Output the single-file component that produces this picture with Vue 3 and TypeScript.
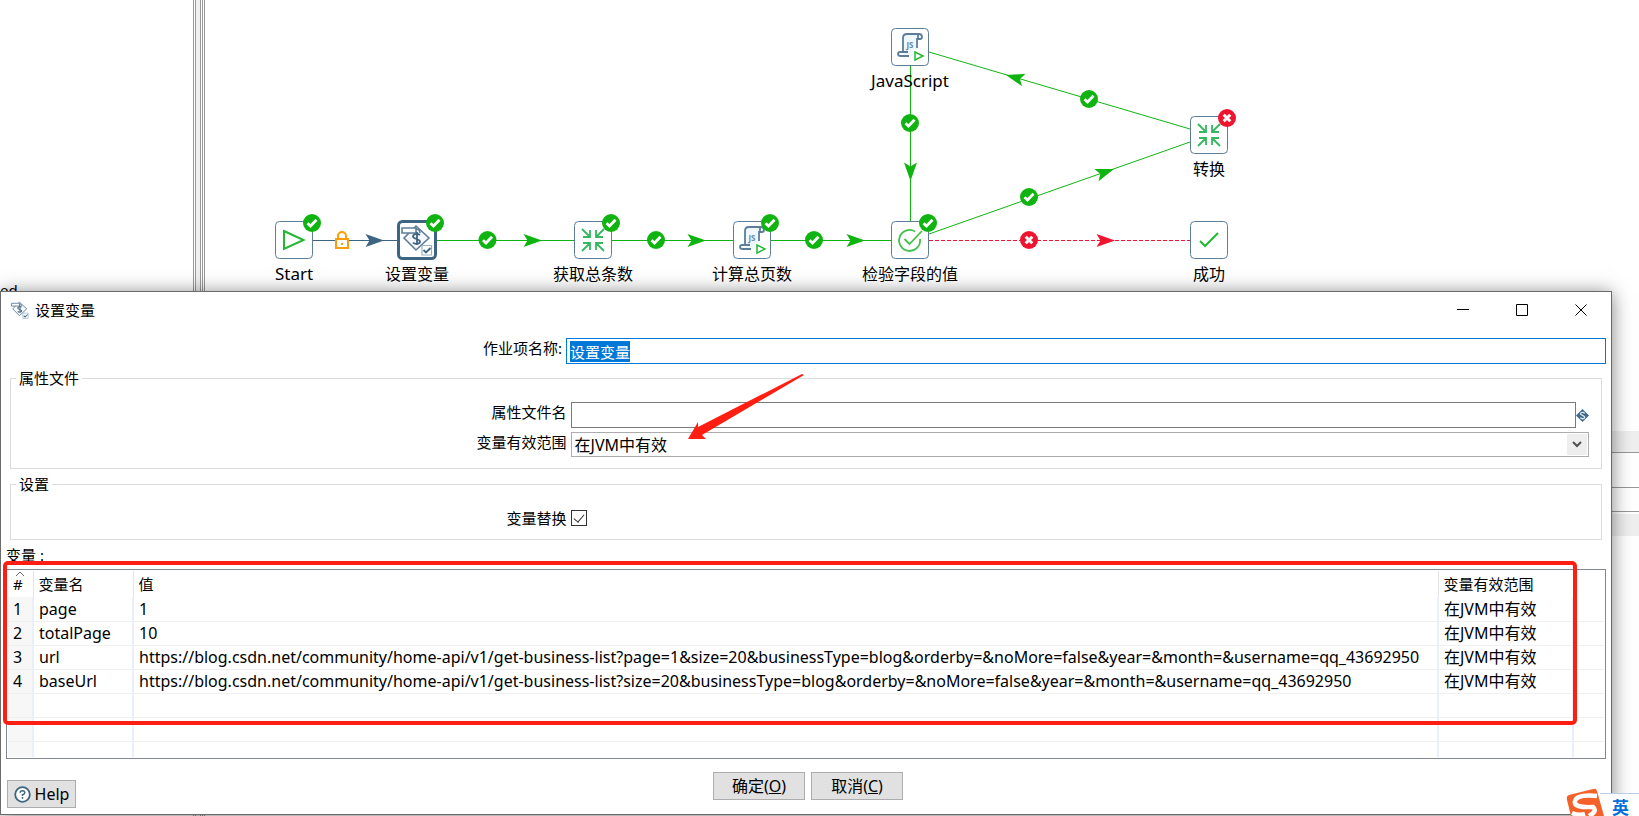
<script setup lang="ts">
import { ref, onMounted } from 'vue'

type Kind = 'start' | 'variables' | 'job' | 'script' | 'check' | 'done'
interface Step { name: string; kind: Kind; x: number; y: number; mark?: 'ok' | 'bad'; selected?: boolean; latin?: boolean }
interface Variable { name: string; value: string; scope: string }

const steps: Step[] = [
  { name: 'Start', kind: 'start', x: 294, y: 240, mark: 'ok', latin: true },
  { name: '设置变量', kind: 'variables', x: 417, y: 240, mark: 'ok', selected: true },
  { name: '获取总条数', kind: 'job', x: 593, y: 240, mark: 'ok' },
  { name: '计算总页数', kind: 'script', x: 752, y: 240, mark: 'ok' },
  { name: '检验字段的值', kind: 'check', x: 910, y: 240, mark: 'ok' },
  { name: '成功', kind: 'done', x: 1209, y: 240 },
  { name: '转换', kind: 'job', x: 1209, y: 135, mark: 'bad' },
  { name: 'JavaScript', kind: 'script', x: 910, y: 47, latin: true }
]

const hops = [
  { d: 'M313 240.5H397', tone: 'navy' },
  { d: 'M437 240.5H574', tone: 'green' },
  { d: 'M612 240.5H733', tone: 'green' },
  { d: 'M771 240.5H891', tone: 'green' },
  { d: 'M910.5 65V221', tone: 'green' },
  { d: 'M929 234L1190 142', tone: 'green' },
  { d: 'M1190 129L929 52', tone: 'green' },
  { d: 'M929 240.5H1190', tone: 'red' }
]

const arrows = [
  { x: 384, y: 240.5, turn: 0, tone: 'navy' },
  { x: 542, y: 240.5, turn: 0, tone: 'green' },
  { x: 706, y: 240.5, turn: 0, tone: 'green' },
  { x: 865, y: 240.5, turn: 0, tone: 'green' },
  { x: 910.5, y: 181, turn: 90, tone: 'green' },
  { x: 1114, y: 169, turn: -19, tone: 'green' },
  { x: 1006, y: 75, turn: 196, tone: 'green' },
  { x: 1115, y: 240.5, turn: 0, tone: 'red' }
]

const marks = [
  { x: 487.5, y: 240, ok: true },
  { x: 656, y: 240, ok: true },
  { x: 814, y: 240, ok: true },
  { x: 910, y: 123, ok: true },
  { x: 1029, y: 197, ok: true },
  { x: 1089, y: 99, ok: true },
  { x: 1029, y: 240, ok: false }
]

const variables: Variable[] = [
  { name: 'page', value: '1', scope: '在JVM中有效' },
  { name: 'totalPage', value: '10', scope: '在JVM中有效' },
  { name: 'url', value: 'https://blog.csdn.net/community/home-api/v1/get-business-list?page=1&size=20&businessType=blog&orderby=&noMore=false&year=&month=&username=qq_43692950', scope: '在JVM中有效' },
  { name: 'baseUrl', value: 'https://blog.csdn.net/community/home-api/v1/get-business-list?size=20&businessType=blog&orderby=&noMore=false&year=&month=&username=qq_43692950', scope: '在JVM中有效' }
]
const blankRows = 3

const entryName = ref('设置变量')
const fileName = ref('')
const scope = ref('在JVM中有效')
const replace = ref(true)
const nameBox = ref<HTMLInputElement | null>(null)

onMounted(() => {
  nameBox.value?.focus()
  nameBox.value?.select()
})
</script>

<template>
  <div class="desktop">
    <div class="workspace">
      <aside class="tree"><span class="tree-item">ed</span></aside>
      <div class="sash"><i></i></div>
      <main class="canvas-area"></main>
    </div>
    <svg class="canvas" width="1400" height="291" viewBox="0 0 1400 291" role="img" aria-label="作业">
      <defs>
        <g id="ok"><circle r="9" fill="#10b410" /><path d="M-4.5 .2L-1.5 3L4.5 -3.2" fill="none" stroke="#fff" stroke-width="2.8" /></g>
        <g id="bad"><circle r="9" fill="#f0142f" /><path d="M-3.3 -3.3L3.3 3.3M3.3 -3.3L-3.3 3.3" fill="none" stroke="#fff" stroke-width="3" /></g>
        <g id="variables" fill="none" stroke="#5d7d99" stroke-width="1.6">
          <path d="M-1 -14L12 -2L-1 10L-13 -2Z" fill="#f5f7fa" />
          <path d="M-15 -12H-1V-7H-15Z" fill="#fff" />
          <path d="M-1 -11Q3 -11 3 -7" />
          <path d="M3 -5C0 -7 -4 -6 -4 -3.500S3 -1 3 1.500S-2 5 -4 2.500M0 -8V5" stroke="#3d6480" stroke-width="1.800" />
          <path d="M5 5.500H14.500V15H5Z" fill="#fff" stroke="#9bb0c1" stroke-width="1.200" />
          <path d="M6.500 10L9 12.500L13.500 8" stroke="#3d6480" stroke-width="1.800" />
        </g>
      </defs>
      <path v-for="(h, i) in hops" :key="'h' + i" :d="h.d" :class="['hop', h.tone]" />
      <path v-for="(a, i) in arrows" :key="'a' + i" d="M0 0L-18.500 -6.500L-14.500 0L-18.500 6.500Z" :class="['tip', a.tone]" :transform="`translate(${a.x} ${a.y}) rotate(${a.turn})`" />
      <use v-for="(m, i) in marks" :key="'m' + i" :href="m.ok ? '#ok' : '#bad'" :x="m.x" :y="m.y" />
      <g transform="translate(342 240)">
        <path d="M-6 -1H6V8H-6ZM-4 -1V-4A4 4 0 0 1 4 -4V-1" fill="#fff" stroke="#ff9c0e" stroke-width="2" />
        <path d="M-1 3H1V5H-1Z" fill="#ff9c0e" />
      </g>
      <g v-for="s in steps" :key="s.name" :transform="`translate(${s.x} ${s.y})`">
        <rect :class="['box', { selected: s.selected }]" x="-18.500" y="-18.500" width="37" height="37" rx="4" />
        <path v-if="s.kind === 'start'" d="M-10 -9L9.500 0L-10 9Z" class="green-line" />
        <use v-else-if="s.kind === 'variables'" href="#variables" />
        <path v-else-if="s.kind === 'job'" d="M-11 -11L-3 -3M-3 -10V-3H-10M11 -11L3 -3M3 -10V-3H10M-11 11L-3 3M-3 10V3H-10M11 11L3 3M3 10V3H10" fill="none" stroke="#35b85f" stroke-width="1.800" />
        <g v-else-if="s.kind === 'script'">
          <path d="M-7 5V-9Q-7 -13 -3 -13H8Q12 -13 12 -10Q12 -8 10 -8H7V3H3V9H-7Z" fill="#eef8fd" />
          <path d="M-7 5V-9Q-7 -13 -3 -13H9Q12 -13 12 -10Q12 -8 10 -8H7V1M8 -12V-8M-1 9H-9Q-12 9 -12 7Q-12 5 -10 5H-2" fill="none" stroke="#5d7d99" stroke-width="1.800" />
          <text x="0" y="1" class="js">JS</text>
          <path d="M5 5L13 9L5 13Z" class="green-line small" />
        </g>
        <path v-else-if="s.kind === 'check'" d="M5 -8.500A10.500 10.500 0 1 0 10 -1M-5.500 -1L-.500 4L12 -9" fill="none" stroke="#43c04c" stroke-width="1.800" />
        <path v-else d="M-9 1L-4 6L9 -7" class="green-line" />
        <use v-if="s.mark" :href="s.mark === 'ok' ? '#ok' : '#bad'" x="18" y="-17" />
        <text y="40" :class="['caption', { latin: s.latin }]">{{ s.name }}</text>
      </g>
    </svg>
    <div class="side-panels"><i></i><i></i><i></i><i></i></div>

    <section class="dialog" role="dialog" aria-labelledby="dialog-title">
      <header class="titlebar">
        <svg class="title-icon" width="18" height="18" viewBox="-16 -16 32 32"><use href="#variables" /></svg>
        <h1 id="dialog-title">设置变量</h1>
        <div class="window-buttons">
          <button type="button" aria-label="最小化"><svg width="12" height="12"><path d="M0 5.500H12" /></svg></button>
          <button type="button" aria-label="最大化"><svg width="12" height="12"><path d="M.5 .5H11.500V11.500H.5Z" /></svg></button>
          <button type="button" aria-label="关闭"><svg width="12" height="12"><path d="M.5 .5L11.500 11.500M11.500 .5L.5 11.500" /></svg></button>
        </div>
      </header>

      <form class="body" @submit.prevent>
        <div class="row name-row">
          <label for="entry-name">作业项名称:</label>
          <input id="entry-name" ref="nameBox" v-model="entryName" type="text" class="focused" />
        </div>

        <fieldset class="file-group">
          <legend>属性文件</legend>
          <div class="row">
            <label for="file-name">属性文件名</label>
            <div class="with-icon">
              <input id="file-name" v-model="fileName" type="text" />
              <svg width="13" height="13" viewBox="0 0 13 13"><path d="M6.500 0L13 6.500L6.500 13L0 6.500Z" fill="#426a8a" /><path d="M8.700 4.300C7.500 2.800 4.500 3.200 4.500 4.800S8.700 6.500 8.700 8.300S5.500 10.200 4.300 8.700" fill="none" stroke="#dbe6ee" stroke-width="1.300" /></svg>
            </div>
          </div>
          <div class="row">
            <label for="scope">变量有效范围</label>
            <div class="select-wrap">
              <select id="scope" v-model="scope"><option>在JVM中有效</option></select>
              <span class="chevron"><svg width="10" height="7"><path d="M1 1L5 5L9 1" fill="none" stroke="#505050" stroke-width="2" /></svg></span>
            </div>
          </div>
        </fieldset>

        <fieldset class="settings-group">
          <legend>设置</legend>
          <div class="row check-row">
            <label for="replace">变量替换</label>
            <input id="replace" v-model="replace" type="checkbox" />
          </div>
        </fieldset>

        <p id="vars-label" class="vars-label">变量 :</p>
        <div class="grid-box">
          <table aria-labelledby="vars-label">
            <colgroup><col class="c-num" /><col class="c-name" /><col class="c-value" /><col class="c-scope" /><col class="c-rest" /></colgroup>
            <thead>
              <tr>
                <th><svg class="sort" width="10" height="6"><path d="M1 5L5 1L9 5" fill="none" stroke="#666" /></svg>#</th>
                <th>变量名</th><th>值</th><th>变量有效范围</th><th></th>
              </tr>
            </thead>
            <tbody>
              <tr v-for="(v, i) in variables" :key="v.name">
                <td>{{ i + 1 }}</td><td>{{ v.name }}</td><td>{{ v.value }}</td><td>{{ v.scope }}</td><td></td>
              </tr>
              <tr v-for="n in blankRows" :key="'blank' + n"><td></td><td></td><td></td><td></td><td></td></tr>
            </tbody>
          </table>
          <div class="highlight"></div>
        </div>

        <footer class="actions">
          <button type="button" class="help">
            <svg width="17" height="17" viewBox="0 0 17 17"><circle cx="8.500" cy="8.500" r="7.300" fill="#fff" stroke="#3d6480" stroke-width="1.800" /><path d="M6.200 6.800Q6.300 4.800 8.500 4.800T10.800 6.700Q10.800 7.800 8.500 8.800V10M8.500 11V12.700" fill="none" stroke="#3d6480" stroke-width="1.500" /></svg>
            Help
          </button>
          <div class="confirm">
            <button type="submit">确定(<u>O</u>)</button>
            <button type="button">取消(<u>C</u>)</button>
          </div>
        </footer>
      </form>
      <svg class="pointer" width="118" height="66" viewBox="0 0 118 66"><path d="M0 65L10 48V53L114 0L116 1L14 61L18 65Z" fill="#ff1f12" /></svg>
    </section>

    <div class="ime">
      <svg width="40" height="28" viewBox="0 0 40 28"><path d="M3 7L27 1Q30 0 31 3L38 28H5L1 12Q0 8 3 7Z" fill="#f4622a" /><path d="M31 8Q11 6 9 13T27 19Q32 23 23 28M6 25Q13 28 19 26" fill="none" stroke="#fff" stroke-width="4.500" /></svg>
      <span>英</span>
    </div>
  </div>
</template>

<style>
html, body { height: 100%; margin: 0; overflow: hidden; }
#app { height: 100%; }
</style>

<style scoped>
* { box-sizing: border-box; }
.desktop { position: relative; height: 100%; min-height: 816px; overflow: hidden; background: #fff; color: #000; font: 15px/20px "Noto Sans", "Noto Sans CJK SC", sans-serif; }
.workspace { display: flex; height: 100%; }
.tree { display: flex; width: 193px; padding-top: 280px; }
.tree-item { line-height: 20px; }
.sash { width: 12px; border: solid #999; border-width: 0 1px; background: #fff; }
.sash i { display: block; width: 8px; height: 100%; margin-left: 1px; border: solid #999; border-width: 0 1px; background: linear-gradient(90deg, #f0f0f0 4px, #999 4px, #999 5px, #fff 5px); }
.canvas-area { flex: 1; }
.canvas { position: absolute; left: 0; top: 0; }
.hop { fill: none; stroke-width: 1; }
.hop.green { stroke: #10b410; }
.hop.navy { stroke: #3d6480; }
.hop.red { stroke: #f0142f; stroke-dasharray: 4 2; }
.tip.green { fill: #10b410; }
.tip.navy { fill: #3d6480; }
.tip.red { fill: #f0142f; }
.box { fill: #fff; stroke: #5d7d99; }
.box.selected { stroke: #3d6480; stroke-width: 3; }
.green-line { fill: none; stroke: #23b833; stroke-width: 2; }
.green-line.small { fill: #fff; stroke-width: 1.5; }
.js { font-size: 8px; font-weight: 700; text-anchor: middle; fill: #6c8aa3; }
.caption { font-size: 16px; text-anchor: middle; }
.caption.latin { font-size: 17px; }

.side-panels { position: absolute; top: 431px; right: 0; width: 40px; }
.side-panels i { display: block; border-bottom: 1px solid #999; }
.side-panels i:nth-child(1) { height: 22px; background: #efefef; }
.side-panels i:nth-child(2) { height: 35px; }
.side-panels i:nth-child(3) { height: 24px; }
.side-panels i:nth-child(4) { height: 24px; border: 0; border-top: 2px solid #fff; background: #efefef; }

.dialog { position: absolute; top: 291px; left: 0; right: 27px; bottom: 1px; display: flex; flex-direction: column; background: #fff; border: 1px solid #6b6b6b; box-shadow: 0 2px 18px rgba(0, 0, 0, .5); }
.titlebar { display: flex; align-items: center; height: 38px; padding: 0 1px 0 10px; }
h1 { margin: 0 auto 0 6px; font-size: 15px; font-weight: 400; }
.window-buttons { display: flex; }
.window-buttons button { display: flex; align-items: center; justify-content: center; width: 59px; height: 36px; padding: 0; border: 0; background: none; }
.window-buttons path { fill: none; stroke: #000; }
.body { flex: 1; display: flex; flex-direction: column; padding: 10px 5px 5px; }
.row { display: grid; grid-template-columns: 35% 1fr; }
.row > label { padding-right: 4px; text-align: right; }
input[type=text] { width: 100%; height: 26px; margin: 0; padding: 0 3px; border: 1px solid #7a7a7a; border-radius: 0; outline: 0; background: #fff; color: #000; font: inherit; }
input.focused { border-color: #0078d7; }
input::selection { background: #0078d7; color: #fff; }
fieldset { min-width: 0; margin: 0 4px; border: 1px solid #dcdcdc; }
legend { padding: 0 3px; line-height: 20px; }
.file-group { display: flex; flex-direction: column; margin-top: 4px; height: 101px; padding: 14px 12px 0 5px; }
.file-group .row { grid-template-columns: calc(35% + 4px) 1fr; height: 30px; }
.with-icon { display: flex; height: 26px; align-items: center; }
.with-icon input { flex: 1; width: auto; }
.select-wrap { position: relative; height: 25px; }
select { width: 100%; height: 25px; padding: 0 3px; border: 1px solid #acacac; border-radius: 0; appearance: none; background: #fff; color: #000; font: inherit; font-size: 16px; }
.chevron { position: absolute; top: 2px; right: 2px; display: flex; align-items: center; justify-content: center; width: 20px; height: 21px; background: #eee; pointer-events: none; }
.settings-group { height: 66px; margin-top: 5px; padding: 14px 12px 0 5px; }
.check-row { grid-template-columns: calc(35% + 4px) 1fr; }
input[type=checkbox] { appearance: none; width: 16px; height: 16px; margin: 2px 0 0; border: 1px solid #333; background: #fff; display: grid; place-items: center; }
input[type=checkbox]:checked::after { content: ""; width: 5px; height: 9px; margin-bottom: 2px; border: solid #333; border-width: 0 1px 1px 0; rotate: 40deg; }
.vars-label { margin: 5px 0 4px; line-height: 20px; }
.grid-box { position: relative; flex: 1; padding: 1px; border: 1px solid #828790; }
table { width: 100%; table-layout: fixed; border-collapse: collapse; }
.c-num { width: 25px; }
.c-name { width: 100px; }
.c-scope { width: 135px; }
.c-rest { width: 31px; }
th, td { padding: 0 0 0 5px; overflow: hidden; border-right: 2px solid #eaf0fa; font-weight: 400; text-align: left; white-space: nowrap; }
th { height: 26px; border-right: 1px solid #e5e5e5; }
td { height: 24px; border-bottom: 1px solid #f0f0f0; font-size: 16px; }
th:last-child, td:last-child { border-right: 0; }
tbody tr:last-child td { height: 16px; border-bottom: 0; }
td:first-child { background: #f7f7f7; }
th:first-child { position: relative; }
.sort { position: absolute; top: 0; left: 7px; }
.highlight { position: absolute; top: -9px; left: -4px; right: 28px; bottom: 33px; border: 4px solid #ff1f12; border-radius: 5px; pointer-events: none; }
.actions { display: grid; grid-template-columns: 1fr auto 1fr; margin-top: 13px; height: 37px; }
.actions button { height: 28px; padding: 0; border: 1px solid #adadad; background: #e1e1e1; color: #000; font: inherit; font-size: 16px; }
.actions .help { display: flex; align-items: center; justify-content: center; gap: 4px; width: 69px; margin: 8px 0 0 1px; }
.confirm { display: flex; gap: 6px; padding-left: 4px; }
.confirm button { width: 92px; }
.pointer { position: absolute; left: 687px; top: 82px; }

.ime { position: absolute; right: 0; bottom: 0; display: flex; width: 73px; height: 28px; background: linear-gradient(#b9cfe6, #b9cfe6) 100% 5px / 39px 1px no-repeat, linear-gradient(#fff, #fff) 100% 6px / 39px 22px no-repeat; color: #0070d8; }
.ime span { margin: 10px 0 0 6px; font-size: 17px; font-weight: 700; }
</style>
